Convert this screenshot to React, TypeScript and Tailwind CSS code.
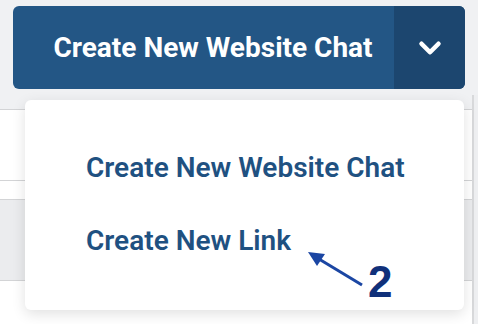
import { ChevronDown } from "lucide-react"

export default function App() {
  const items = ["Create New Website Chat", "Create New Link"]

  return (
    <div
      className="relative w-[478px] h-[324px] overflow-hidden bg-[#f0f1f3]"
      style={{ fontFamily: "Roboto, 'Liberation Sans', sans-serif" }}
    >
      {/* page underneath */}
      <div className="flex h-full">
        <div className="flex flex-1 flex-col pt-[109px]">
          <div className="h-[71px] border-t border-[#d3d4d6] bg-white"></div>
          <div className="h-[19px] border-t border-[#d3d4d6] bg-white"></div>
          <div className="h-[81px] border-t border-[#d3d4d6] bg-[#ebecee]"></div>
          <div className="flex-1 border-t border-[#d3d4d6] bg-white"></div>
        </div>
        <div className="mt-[95px] w-[6px] border-l-2 border-[#d8d9db] bg-[#eeeff1]"></div>
      </div>

      {/* split button */}
      <div className="absolute left-[13px] top-[6px] flex h-[83px] w-[452px] overflow-hidden rounded-md bg-[#235685]">
        <button className="flex flex-1 items-center justify-center pl-[19px] text-[28px] font-bold leading-[28px] text-white">
          Create New Website Chat
        </button>
        <div className="flex w-[71px] items-center justify-center bg-[#1c466f]">
          <ChevronDown className="h-[34px] w-[34px] text-white" strokeWidth={3.2} />
        </div>
      </div>

      {/* dropdown menu */}
      <div className="absolute left-[25px] top-[100px] flex h-[210px] w-[439px] flex-col gap-[45px] rounded-md bg-white pl-[61px] pt-[54px] shadow-[0_4px_14px_rgba(0,0,0,0.12)]">
        {items.map((item) => (
          <div key={item} className="text-[28px] font-semibold leading-[28px] text-[#1f5181]">
            {item}
          </div>
        ))}
      </div>

      {/* annotation */}
      <svg className="absolute left-[300px] top-[244px]" width="70" height="50" viewBox="0 0 70 50">
        <line x1="14" y1="12" x2="62" y2="41" stroke="#1b46a3" strokeWidth="3" />
        <polygon points="8,8 25,10 17,22" fill="#1b46a3" />
      </svg>
      <div
        className="absolute left-[368px] top-[260px] text-[44px] font-bold leading-[44px] text-[#10307a]"
        style={{ fontFamily: "'Liberation Sans', Arial, sans-serif" }}
      >
        2
      </div>
    </div>
  )
}
